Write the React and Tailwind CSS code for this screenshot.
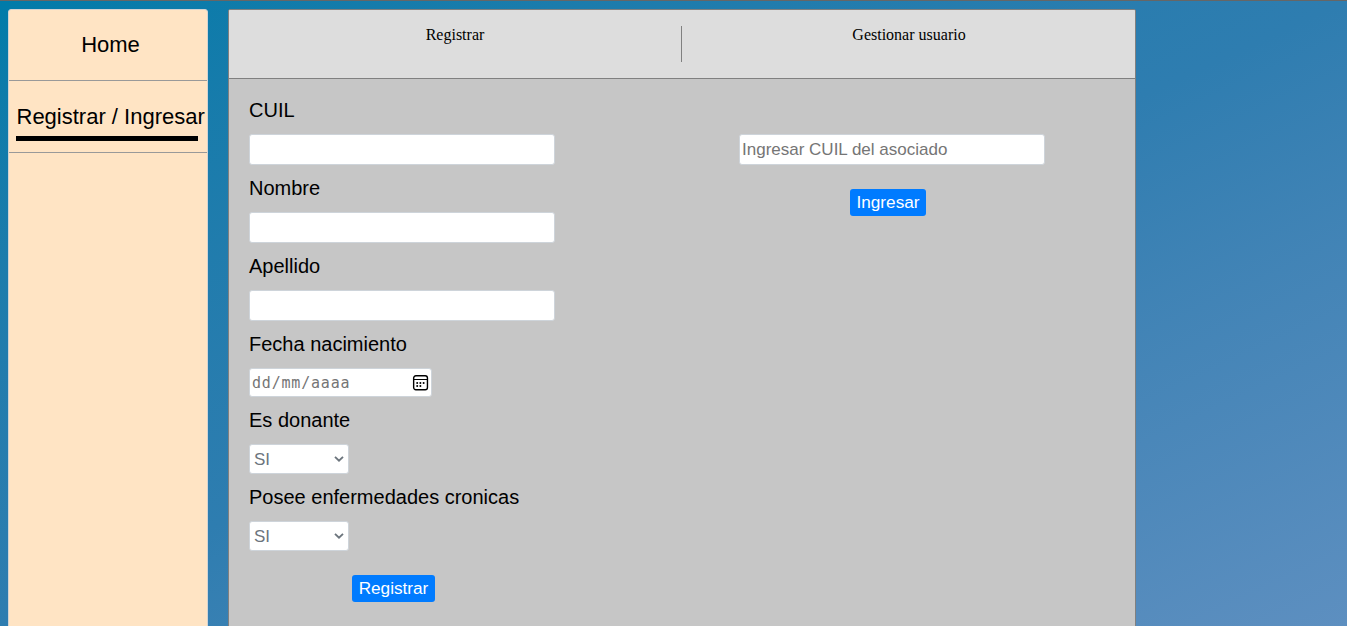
import React from "react";

function Field({ label, children, className = "" }) {
  return (
    <div className={"flex flex-col items-start " + className}>
      <label className="h-[30px] text-[20px] leading-[30px] whitespace-nowrap">{label}</label>
      {children}
    </div>
  );
}

function TextInput({ placeholder, className = "" }) {
  return (
    <input
      type="text"
      placeholder={placeholder}
      className={
        "block h-[31px] w-[306px] rounded-[3px] border border-[#ced4da] bg-white px-[2px] py-0 text-[17px] text-[#495057] outline-none placeholder:text-[#757575] " +
        className
      }
    />
  );
}

function CalendarIcon() {
  return (
    <svg width="17" height="16" viewBox="0 0 17 16" fill="none">
      <rect x="1.65" y="0.75" width="13.8" height="14" rx="2.2" stroke="#000" strokeWidth="1.4" />
      <path d="M1.5 4.5h14" stroke="#000" strokeWidth="1" />
      <g fill="#000">
        <circle cx="5.2" cy="7.9" r="1" />
        <circle cx="8.4" cy="7.9" r="1" />
        <circle cx="11.6" cy="7.9" r="1" />
        <circle cx="5.2" cy="10.9" r="1" />
        <circle cx="8.4" cy="10.9" r="1" />
      </g>
    </svg>
  );
}

function Select() {
  return (
    <button
      type="button"
      className="mt-[9px] flex h-[30px] w-[100px] items-center justify-between rounded-[3px] border border-[#ced4da] bg-white pr-[4px] pl-[4px] text-[17px] text-[#6c757d]"
    >
      <span className="pt-[2px]">SI</span>
      <svg width="10" height="6" viewBox="0 0 10 6" fill="none">
        <path d="M1 0.9L5 4.7L9 0.9" stroke="#6c757d" strokeWidth="1.9" />
      </svg>
    </button>
  );
}

function ActionButton({ children, className = "" }) {
  return (
    <button
      type="button"
      className={
        "flex h-[27px] items-center justify-center rounded-[3px] bg-[#007bff] text-[17.2px] leading-none text-white " +
        className
      }
    >
      {children}
    </button>
  );
}

export default function App() {
  return (
    <div className="flex h-[626px] w-[1347px] items-start overflow-hidden border-t border-[#666] bg-linear-to-br from-[#007ba9] via-[#2e7db0] to-[#5d8fc0] pt-2 pl-2 font-['Liberation_Sans',Arial,sans-serif] text-black">
      <nav className="h-[640px] w-[200px] shrink-0 rounded-[3px] border border-[#d3d3d3] bg-[#ffe4c4] text-[22px]">
        <div className="h-[71px] border-b border-[#999] pt-[18px] pl-[5px] text-center leading-[33px]">
          Home
        </div>
        <div className="h-[72px] border-b border-[#999] px-[7px] pt-[19px]">
          <div className="h-[36px] w-[182px] pl-[0.5px] leading-[33px] whitespace-nowrap">Registrar / Ingresar</div>
          <div className="h-[5px] w-[182px] bg-black" />
        </div>
      </nav>
      <main className="ml-5 h-[640px] w-[908px] shrink-0 overflow-hidden rounded-[2px] border border-[#808080] bg-[#c6c6c6]">
        <header className="flex h-[69px] border-b border-[#808080] bg-[#ddd] pt-[16px] font-['Liberation_Serif','Times_New_Roman',serif] text-[16px] leading-[17px]">
          <div className="h-[36px] w-[453px] border-r border-[#808080] text-center">Registrar</div>
          <div className="h-[36px] w-[453px] pl-px text-center">Gestionar usuario</div>
        </header>
        <div className="flex pl-5">
          <form className="w-[490px] pt-[16px]">
            <Field label="CUIL" className="h-[78px]">
              <TextInput className="mt-[9px]" />
            </Field>
            <Field label="Nombre" className="h-[78px]">
              <TextInput className="mt-[9px]" />
            </Field>
            <Field label="Apellido" className="h-[78px]">
              <TextInput className="mt-[9px]" />
            </Field>
            <Field label="Fecha nacimiento" className="h-[76px]">
              <div className="mt-[9px] flex h-[29px] w-[183px] items-center justify-between rounded-[3px] border border-[#ced4da] bg-white pr-[2px] pl-[2px]">
                <span className="pt-[2px] font-['DejaVu_Sans_Mono',monospace] text-[15px] tracking-[0.8px] text-[#757575]">
                  dd/mm/aaaa
                </span>
                <CalendarIcon />
              </div>
            </Field>
            <Field label="Es donante" className="h-[77px]">
              <Select />
            </Field>
            <Field label="Posee enfermedades cronicas" className="h-[93px]">
              <Select />
            </Field>
            <ActionButton className="ml-[103px] w-[83px]">Registrar</ActionButton>
          </form>
          <section className="pt-[55px]">
            <TextInput placeholder="Ingresar CUIL del asociado" />
            <ActionButton className="mt-[24px] ml-[111px] w-[76px]">Ingresar</ActionButton>
          </section>
        </div>
      </main>
    </div>
  );
}
